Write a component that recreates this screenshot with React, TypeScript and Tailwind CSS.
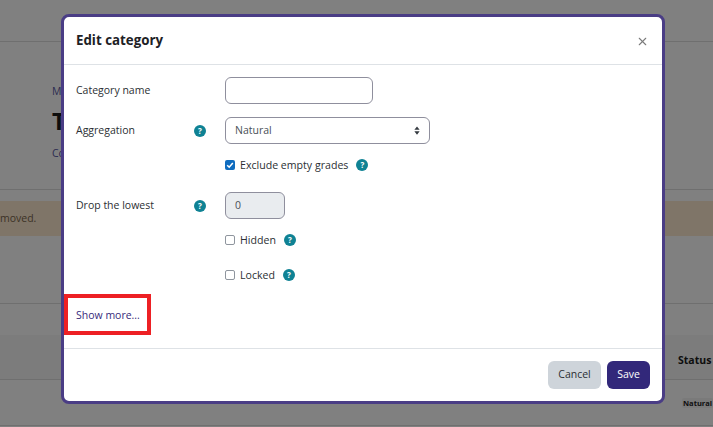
import { X } from "lucide-react";

const FONT = "font-['Open_Sans','Noto_Sans',sans-serif]";

function HelpIcon({ className = "" }: { className?: string }) {
  return (
    <span
      className={`flex h-[12px] w-[12px] shrink-0 items-center justify-center rounded-full bg-[#0f8294] text-[8px] font-bold leading-none text-white ${className}`}
    >
      ?
    </span>
  );
}

function CheckRow({ label, checked, className = "" }: { label: string; checked?: boolean; className?: string }) {
  return (
    <div className={`flex items-center ${className}`}>
      {checked ? (
        <span className="flex h-[10px] w-[10px] items-center justify-center rounded-[2px] bg-[#0f6cbf]">
          <svg viewBox="0 0 10 10" className="h-[10px] w-[10px]">
            <path d="M2.2 5.2 L4.2 7.2 L7.8 2.9" fill="none" stroke="#fff" strokeWidth="1.5" />
          </svg>
        </span>
      ) : (
        <span className="h-[10px] w-[10px] rounded-[2px] border border-[#8f959e] bg-white" />
      )}
      <span className="ml-[5px] text-[10.6px] leading-none text-[#2b2f33]">{label}</span>
      <HelpIcon className="ml-[8px]" />
    </div>
  );
}

function Background() {
  return (
    <div className="h-[427px] overflow-hidden bg-[#808080] text-[#1d1d24]">
      <div className="h-[42px] border-b border-[#6f6f6f]" />
      <div className="h-[148px] border-b border-[#6f6f6f] pl-[52px] pt-[42px]">
        <div className="text-[10.5px] leading-[14px] text-[#2b2b50]">Mi</div>
        <div className="mt-[9px] text-[24px] font-bold leading-[28px] text-[#0e0e0e]">T</div>
        <div className="mt-[11px] text-[10.5px] leading-[14px] text-[#2b2b50]">Co</div>
      </div>
      <div className="mt-[11px] flex h-[35px] items-center bg-[#7f7568] text-[10.5px] text-[#3c3226]">
        <span>moved.</span>
      </div>
      <div className="h-[68px] border-b border-[#6f6f6f]" />
      <div className="flex h-[76px] flex-col border-b border-[#6f6f6f]">
        <div className="h-[31px]" />
        <div className="flex flex-1 items-center justify-end bg-[#7c7c7c] pl-[678px] pt-[8px]">
          <span className="w-[35px] shrink-0 text-[10.5px] font-bold text-[#0e0e0e]">Status</span>
        </div>
      </div>
      <div className="flex h-[46px] items-center border-b border-[#6f6f6f] pl-[682px]">
        <span className="rounded-[2px] bg-[#7a7a7a] px-[1px] text-[7.5px] font-bold leading-[10px] text-[#0e0e0e]">Natural</span>
      </div>
    </div>
  );
}

export default function App() {
  return (
    <div className={`relative h-[427px] w-[713px] overflow-hidden ${FONT}`}>
      <Background />

      <div className="absolute left-[61px] top-[14px] flex h-[390px] w-[604px] flex-col rounded-[8px] border-[3px] border-[#4a3d85] bg-white">
        <div className="flex h-[48px] shrink-0 items-center justify-between border-b border-[#dee2e6] pl-[12px] pr-[13px]">
          <h2 className="text-[13.3px] font-bold leading-none text-[#1d2125]">Edit category</h2>
          <X size={13} strokeWidth={2} className="mt-[2px] text-[#7b7b7b]" />
        </div>

        <div className="flex-1 pl-[12px] pt-[12px] text-[10.5px] text-[#2b2f33]">
          <div className="flex h-[27px] items-center">
            <label className="w-[149px]">Category name</label>
            <div className="h-[27px] w-[148px] rounded-[6px] border border-[#8f8f9d] bg-white" />
          </div>
          <div className="mt-[13px] flex h-[27px] items-center">
            <label className="w-[118px]">Aggregation</label>
            <HelpIcon className="mr-[19px]" />
            <div className="flex h-[27px] w-[205px] items-center justify-between rounded-[6px] border border-[#8f8f9d] bg-white pl-[9px] pr-[9px]">
              <span className="text-[#495057]">Natural</span>
              <svg viewBox="0 0 8 12" className="h-[9px] w-[6px]">
                <path d="M4 0.5 L7.5 5 L0.5 5 Z M4 11.5 L0.5 7 L7.5 7 Z" fill="#343a40" />
              </svg>
            </div>
          </div>
          <CheckRow label="Exclude empty grades" checked className="ml-[149px] mt-[16px] h-[10px]" />
          <div className="mt-[22px] flex h-[27px] items-center">
            <label className="w-[118px]">Drop the lowest</label>
            <HelpIcon className="mr-[19px]" />
            <div className="flex h-[27px] w-[60px] items-center rounded-[6px] border border-[#8f8f9d] bg-[#e9ecef] pl-[9px] text-[#495057]">0</div>
          </div>
          <CheckRow label="Hidden" className="ml-[149px] mt-[16px] h-[10px]" />
          <CheckRow label="Locked" className="ml-[149px] mt-[25px] h-[10px]" />
          <a className="mt-[28px] block text-[10.5px] leading-[14px] text-[#372b7b]">Show more...</a>
        </div>

        <div className="flex h-[53px] shrink-0 items-start justify-end gap-[6px] border-t border-[#dee2e6] pr-[12px] pt-[12px] text-[10.5px]">
          <button className="h-[28px] w-[53px] rounded-[6px] bg-[#ced4da] text-[#2b2f33]">Cancel</button>
          <button className="h-[28px] w-[43px] rounded-[6px] bg-[#32287a] font-medium text-white">Save</button>
        </div>

        {/* red annotation round the link */}
        <div className="absolute left-0 top-[277px] h-[41px] w-[87px] border-[4px] border-[#ed2024]" />
      </div>
    </div>
  );
}
